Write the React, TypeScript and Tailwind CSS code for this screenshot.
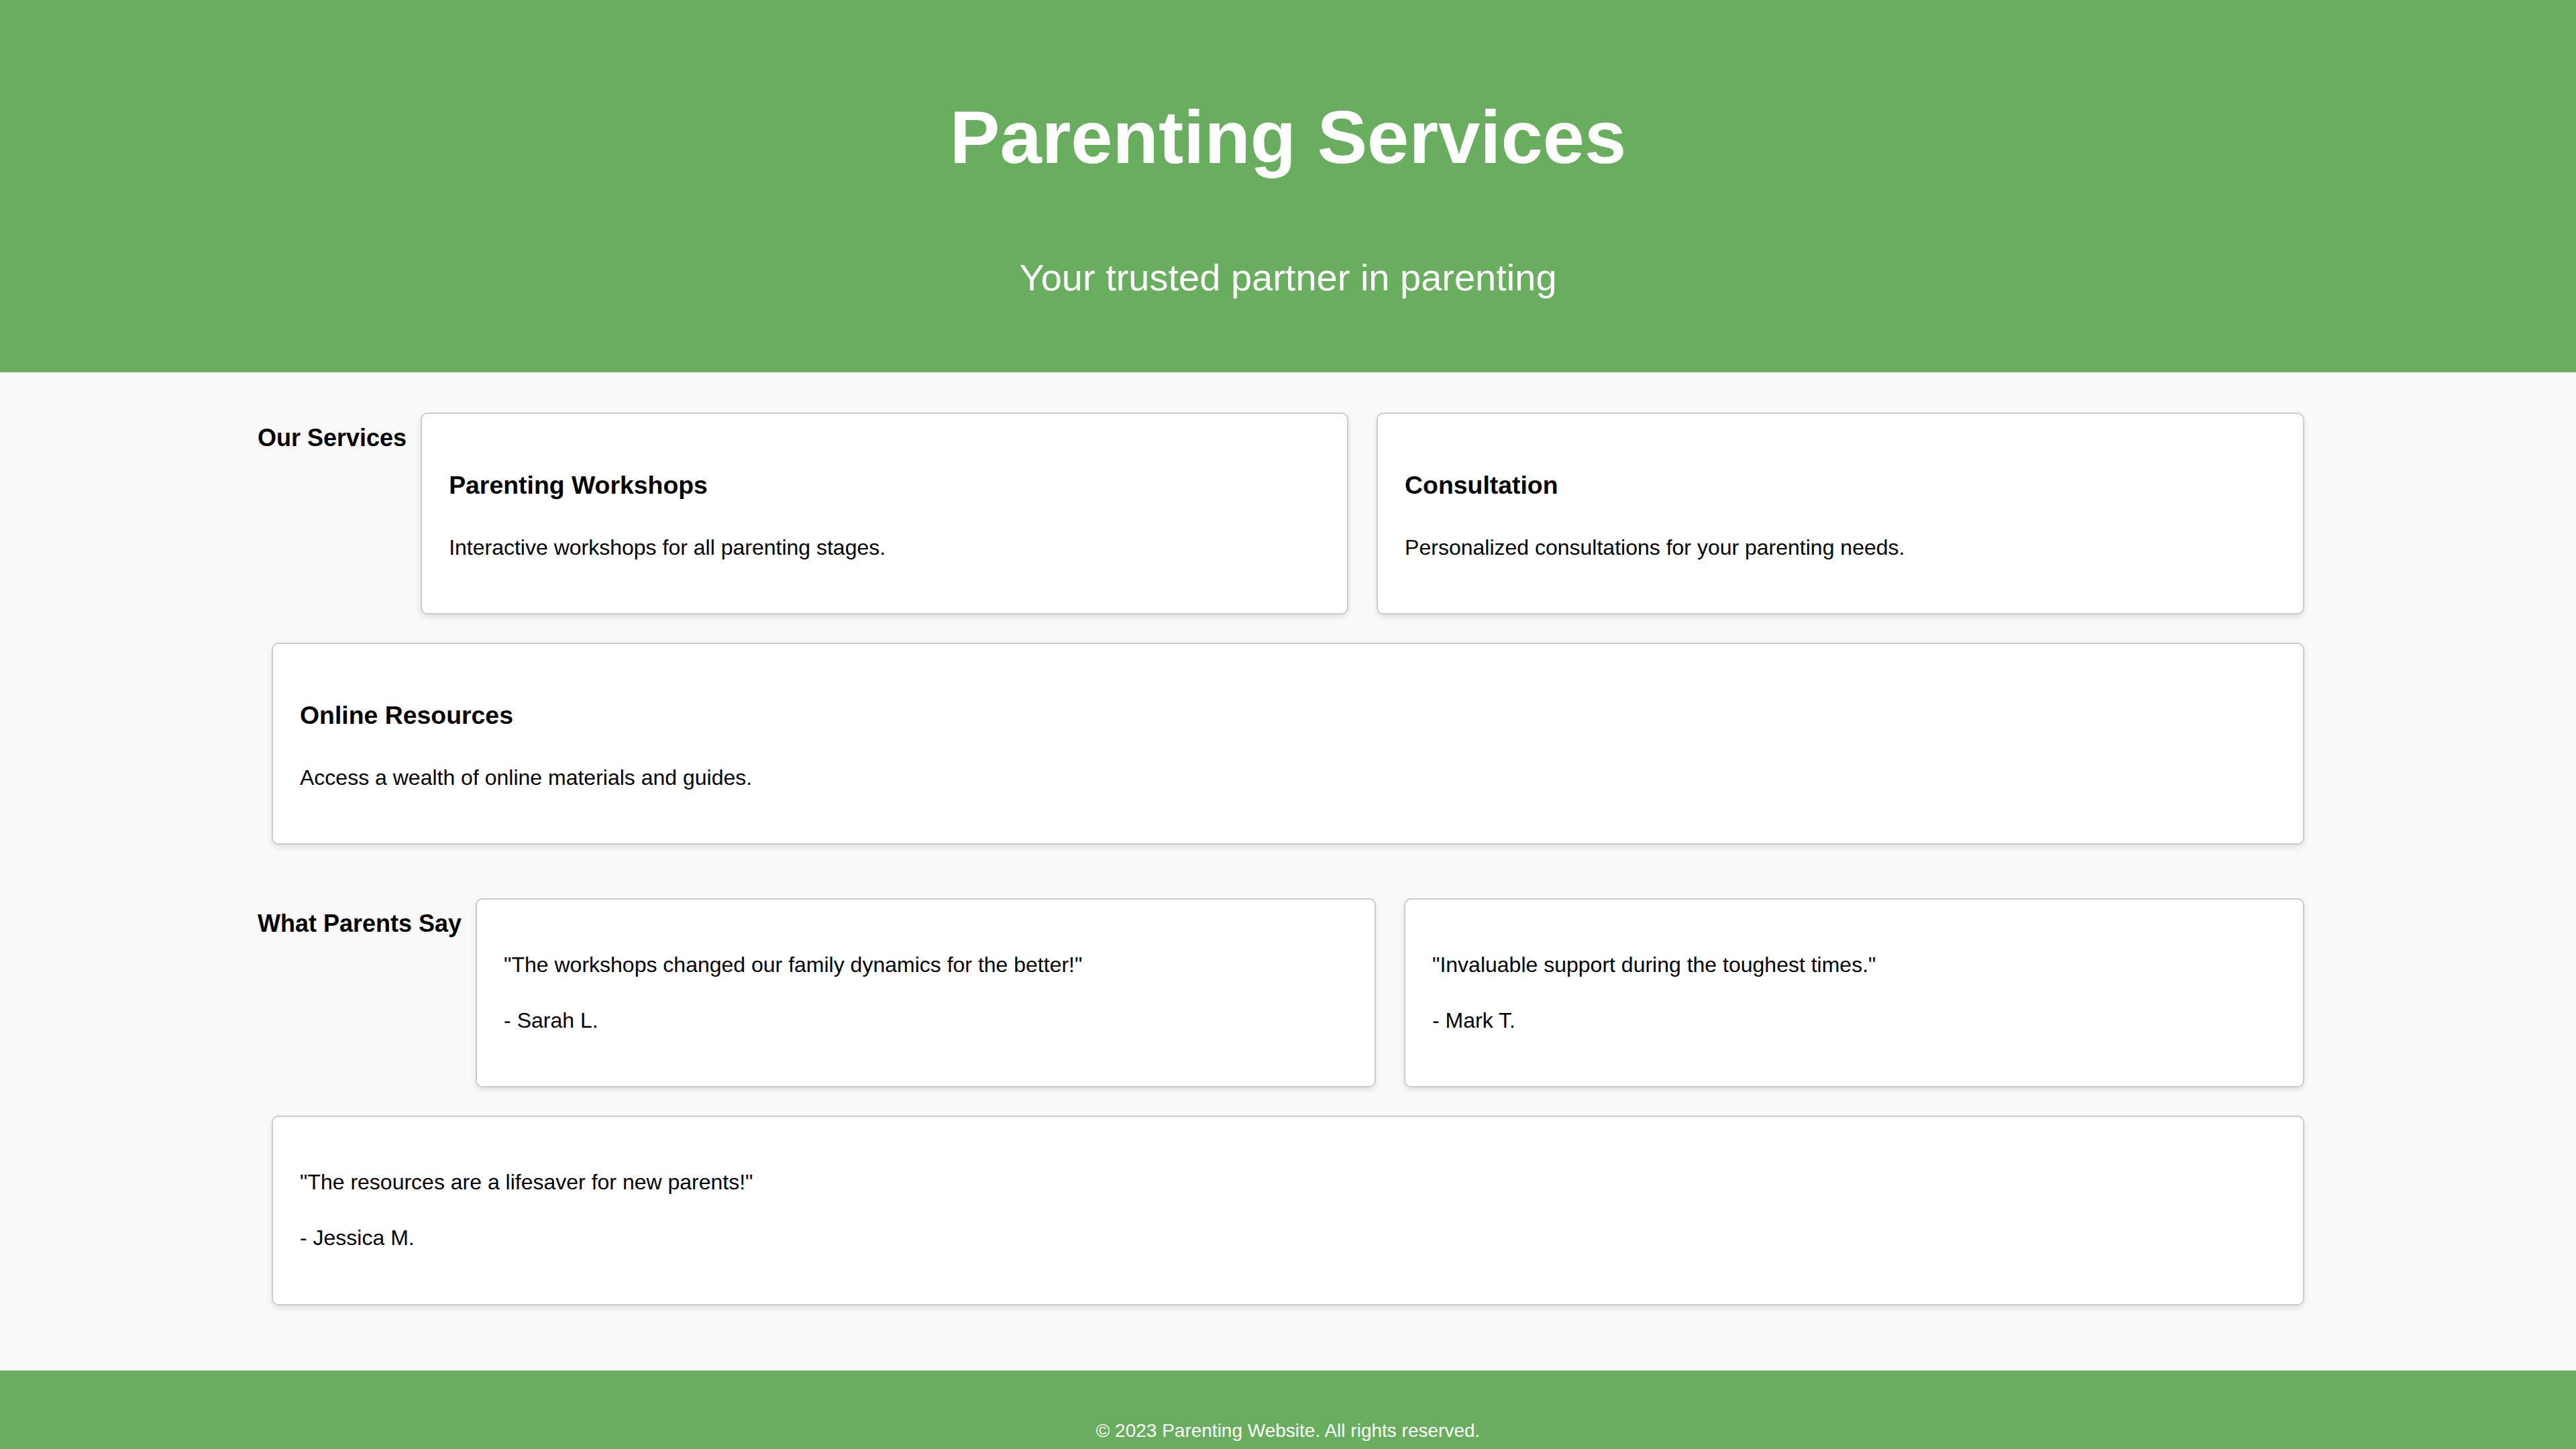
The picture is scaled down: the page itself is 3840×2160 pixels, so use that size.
const services = [
  { title: "Parenting Workshops", text: "Interactive workshops for all parenting stages." },
  { title: "Consultation", text: "Personalized consultations for your parenting needs." },
  { title: "Online Resources", text: "Access a wealth of online materials and guides." },
];

const testimonials = [
  { quote: "\"The workshops changed our family dynamics for the better!\"", author: "- Sarah L." },
  { quote: "\"Invaluable support during the toughest times.\"", author: "- Mark T." },
  { quote: "\"The resources are a lifesaver for new parents!\"", author: "- Jessica M." },
];

const card =
  "m-[21px] flex-1 basis-[40%] rounded-[10px] border-2 border-[#cccccc] bg-white px-[40px] py-[40px] shadow-[0_4px_8px_rgba(0,0,0,0.1)]";

export default function App() {
  return (
    <div className="min-h-screen bg-[#f9f9f9] font-['Liberation_Sans',Arial,sans-serif] leading-[1.6] text-black">
      <header className="bg-[#69ae5e] px-[40px] py-[40px] text-center text-white">
        <h1 className="mt-[75px] mb-[75px] text-[112px] font-bold leading-[1.6]">Parenting Services</h1>
        <p className="mb-[56px] text-[56px] leading-[1.6]">Your trusted partner in parenting</p>
      </header>

      <main className="mx-auto w-[80%] pt-[39px] pb-[38px]">
        <section className="mb-[38px] flex flex-wrap">
          <h2 className="mt-[30px] shrink-0 text-[36px] font-bold leading-[1.6]">Our Services</h2>
          {services.map((s) => (
            <div key={s.title} className={card}>
              <h3 className="mt-[37px] mb-[37px] text-[37.4px] font-bold leading-[1.6]">{s.title}</h3>
              <p className="my-[32px] text-[32px] leading-[1.6]">{s.text}</p>
            </div>
          ))}
        </section>

        <section className="mb-[38px] flex flex-wrap">
          <h2 className="mt-[30px] shrink-0 text-[36px] font-bold leading-[1.6]">What Parents Say</h2>
          {testimonials.map((t) => (
            <div key={t.author} className={card}>
              <p className="my-[32px] text-[32px] leading-[1.6]">{t.quote}</p>
              <p className="my-[32px] text-[32px] leading-[1.6]">{t.author}</p>
            </div>
          ))}
        </section>
      </main>

      <footer className="bg-[#69ae5e] px-[40px] py-[40px] text-center text-white">
        <p className="my-[28px] text-[28px] leading-[1.6]">© 2023 Parenting Website. All rights reserved.</p>
      </footer>
    </div>
  );
}
